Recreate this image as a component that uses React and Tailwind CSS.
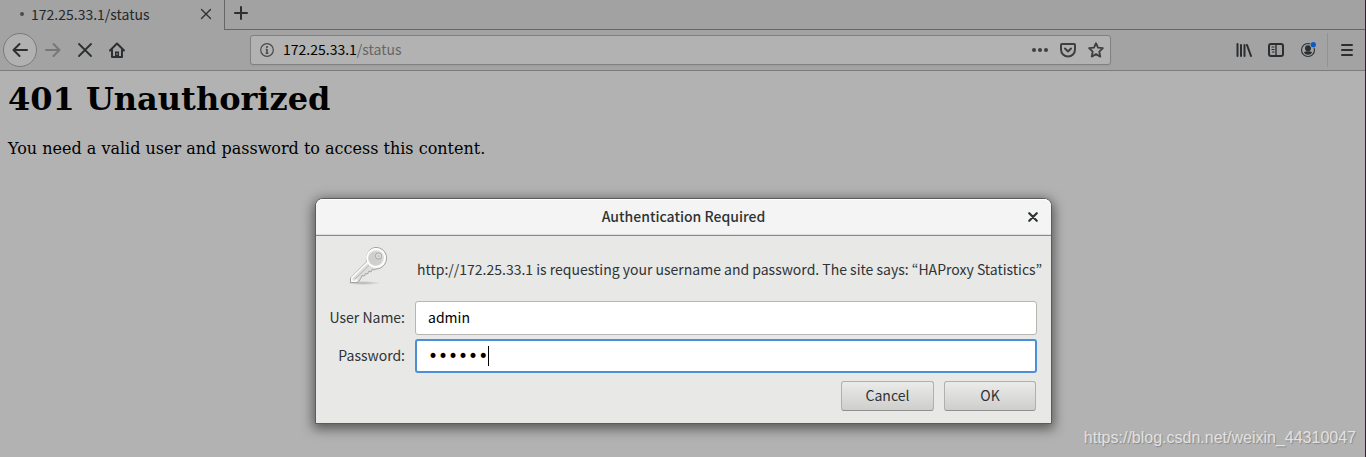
import React, { useState } from "react";

const BackIcon = () => (
  <svg width="16" height="16" viewBox="0 0 16 16" fill="none" stroke="currentColor" strokeWidth="2" strokeLinecap="round" strokeLinejoin="round">
    <path d="M15 8H1.5M7.5 2L1.5 8l6 6" />
  </svg>
);

const ForwardIcon = () => (
  <svg width="16" height="16" viewBox="0 0 16 16" fill="none" stroke="currentColor" strokeWidth="2" strokeLinecap="round" strokeLinejoin="round">
    <path d="M1 8h13.5M8.5 2l6 6-6 6" />
  </svg>
);

const CrossIcon = ({ size = 16, stroke = 1.8 }) => (
  <svg width={size} height={size} viewBox="0 0 16 16" fill="none" stroke="currentColor" strokeWidth={stroke} strokeLinecap="round">
    <path d="M2 2l12 12M14 2L2 14" />
  </svg>
);

const HomeIcon = () => (
  <svg width="16" height="16" viewBox="0 0 16 16" fill="none" stroke="currentColor" strokeWidth="2" strokeLinecap="round" strokeLinejoin="round">
    <path d="M1 8.5L8 1.5l7 7M3 8v7h10V8" />
    <path d="M6 15V9.5h4V15z" fill="currentColor" stroke="none" />
    <path d="M8 11.5v1" stroke="#a3a3a3" strokeWidth="1" />
  </svg>
);

const PlusIcon = () => (
  <svg width="16" height="16" viewBox="0 0 16 16" fill="none" stroke="currentColor" strokeWidth="2" strokeLinecap="round">
    <path d="M8 2v12M2 8h12" />
  </svg>
);

const InfoIcon = () => (
  <svg width="14" height="14" viewBox="0 0 14 14" fill="none" stroke="currentColor">
    <circle cx="7" cy="7" r="6.3" strokeWidth="1.2" />
    <path d="M7 3v2M7 6v4.5M5.7 10.3h2.6M5.8 6.5H7" strokeWidth="1.6" />
  </svg>
);

const DotsIcon = () => (
  <svg width="16" height="16" viewBox="0 0 16 16" fill="currentColor">
    <circle cx="2" cy="8" r="2" />
    <circle cx="8" cy="8" r="2" />
    <circle cx="14" cy="8" r="2" />
  </svg>
);

const PocketIcon = () => (
  <svg width="16" height="16" viewBox="0 0 16 16" fill="none" stroke="currentColor" strokeWidth="2" strokeLinecap="round" strokeLinejoin="round">
    <path d="M2 2h12a1 1 0 0 1 1 1v4.5a7 7 0 0 1-14 0V3a1 1 0 0 1 1-1z" />
    <path d="M5 6.5l3 3 3-3" />
  </svg>
);

const StarIcon = () => (
  <svg width="16" height="16" viewBox="0 0 16 16" fill="none" stroke="currentColor" strokeWidth="1.8" strokeLinejoin="round">
    <path d="M8 1.2l2 4.5 4.9.5-3.6 3.4 1 5L8 12.1l-4.3 2.5 1-5L1.1 6.2 6 5.7z" />
  </svg>
);

const LibraryIcon = () => (
  <svg width="16" height="16" viewBox="0 0 16 16" fill="none" stroke="currentColor" strokeWidth="2" strokeLinecap="round">
    <path d="M1.5 2v12M5 3v11M8.5 3v11M11 3l4 11" />
  </svg>
);

const SidebarIcon = () => (
  <svg width="16" height="16" viewBox="0 0 16 16" fill="none" stroke="currentColor">
    <rect x="1" y="2" width="14" height="12" rx="2" strokeWidth="2" />
    <path d="M8 2v12" strokeWidth="1.4" />
    <path d="M3.5 5h3M3.5 7.5h3M4 10h2.5" strokeWidth="1" />
  </svg>
);

const AccountIcon = () => (
  <svg width="16" height="16" viewBox="0 0 16 16" fill="currentColor">
    <circle cx="8" cy="8" r="6.5" fill="none" stroke="currentColor" strokeWidth="1.1" />
    <circle cx="8" cy="6.2" r="3" />
    <path d="M3.8 10.5c1-1 2.300-1.300 4.200-1.300s3.200.3 4.200 1.300a5 5 0 0 1-8.400 0z" />
    <circle cx="13.3" cy="2.7" r="3.2" fill="#a3a3a3" />
    <circle cx="13.3" cy="2.7" r="2.6" fill="#0a5bc4" />
  </svg>
);

const MenuIcon = () => (
  <svg width="16" height="16" viewBox="0 0 16 16" fill="none" stroke="currentColor" strokeWidth="2" strokeLinecap="round">
    <path d="M3 3h10M3 8h10M3 13h10" />
  </svg>
);

const KeyIcon = () => (
  <svg width="40" height="40" viewBox="0 0 40 40" fill="none">
    <defs>
      <linearGradient id="metal" x1="0" y1="0" x2="1" y2="1">
        <stop offset="0" stopColor="#f6f6f4" />
        <stop offset="0.5" stopColor="#dcddd9" />
        <stop offset="1" stopColor="#eeeeec" />
      </linearGradient>
      <radialGradient id="ground">
        <stop offset="0" stopColor="#777" stopOpacity="0.5" />
        <stop offset="1" stopColor="#777" stopOpacity="0" />
      </radialGradient>
    </defs>
    <ellipse cx="14" cy="37" rx="18" ry="2" fill="url(#ground)" />
    <path
      d="M27 1.5c6 0 10.500 4.500 10.500 10.500S33 23 27 23l-2 1-1.500-1-1.500 3-2-1-1.500 3-2-.5-1 2.500-2.500-.5-1 2.500-3 4.500H1.500v-4.500L17.500 16c-1-8 3-14.500 9.500-14.500z"
      fill="url(#metal)"
      stroke="#a2a49f"
      strokeWidth="1"
      strokeLinejoin="round"
    />
    <path d="M18.5 16.5L2.800 31.800v3.500h4l1.500-2" stroke="#fff" strokeWidth="1.4" />
    <path d="M20 19.500L6 33" stroke="#b5b6b2" strokeWidth="1" />
    <circle cx="27" cy="12" r="9" stroke="#fff" strokeWidth="1.8" />
    <circle cx="26.500" cy="12.500" r="7" fill="#cfd0cc" />
    <circle cx="29.500" cy="10" r="3" fill="#eeeeec" stroke="#a2a49f" />
    <circle cx="29.500" cy="10" r="1.5" fill="#c5c6c2" />
  </svg>
);

const ToolButton = ({ label, disabled, children }) => (
  <button
    aria-label={label}
    disabled={disabled}
    className="flex h-8 w-8 items-center justify-center text-[#2b2f31] disabled:text-[#777777]"
  >
    {children}
  </button>
);

const TabStrip = () => (
  <div className="flex h-[30px] bg-[#a2a2a2]">
    <div className="flex w-[225px] items-center border-r border-[#666666] bg-[#a3a3a3] pr-2 pb-0.5 pl-5">
      <span className="mr-[7px] h-1 w-1 rounded-full bg-[#4c4c4c]" />
      <span className="flex-1 text-[14px] leading-5 text-[#23282a]">172.25.33.1/status</span>
      <button aria-label="Close tab" className="flex h-5 w-5 items-center justify-center text-[#2b2f31]">
        <CrossIcon size={12} />
      </button>
    </div>
    <div className="flex flex-1 items-center border-b border-[#666666] pb-1 pl-2">
      <button aria-label="New tab" className="text-[#2b2f31]">
        <PlusIcon />
      </button>
    </div>
  </div>
);

const AddressBar = () => (
  <div className="mr-[117px] ml-[117px] flex h-[30px] flex-1 items-center rounded-[3px] border border-[#818181] bg-[#b2b2b2] pl-[9px] text-[#4a4a4a] shadow-xs">
    <InfoIcon />
    {/* host is darker than the path */}
    <div className="ml-[9px] flex-1 pb-0.5 text-[14px] leading-5 text-[#666666]">
      <span className="text-black">172.25.33.1</span>/status
    </div>
    <div className="flex text-[#3f3f3f]">
      <button aria-label="Page actions" className="flex w-7 justify-center">
        <DotsIcon />
      </button>
      <button aria-label="Save to Pocket" className="flex w-7 justify-center">
        <PocketIcon />
      </button>
      <button aria-label="Bookmark this page" className="flex w-7 justify-center">
        <StarIcon />
      </button>
    </div>
  </div>
);

const Toolbar = () => (
  <div className="flex h-[41px] items-center border-b border-[#7c7c7c] bg-[#a3a3a3] pr-[2px] pl-[3px]">
    <button
      aria-label="Back"
      className="flex h-[34px] w-[34px] items-center justify-center rounded-full border border-[#7a7a7a] bg-[#b1b1b1] text-[#2b2f31]"
    >
      <BackIcon />
    </button>
    <ToolButton label="Forward" disabled>
      <ForwardIcon />
    </ToolButton>
    <ToolButton label="Stop">
      <CrossIcon />
    </ToolButton>
    <ToolButton label="Home">
      <HomeIcon />
    </ToolButton>
    <AddressBar />
    <ToolButton label="Library">
      <LibraryIcon />
    </ToolButton>
    <ToolButton label="Sidebars">
      <SidebarIcon />
    </ToolButton>
    <ToolButton label="Account">
      <AccountIcon />
    </ToolButton>
    <div className="mr-[3px] ml-[3px] h-[34px] w-px bg-[#929292]" />
    <ToolButton label="Menu">
      <MenuIcon />
    </ToolButton>
  </div>
);

const inputBase = "block h-[34px] w-full rounded-[3px] bg-white text-black outline-none";
const buttonBase =
  "h-[30px] rounded-[3px] border border-[#b0b1ad] border-b-[#8f908d] bg-linear-to-b from-[#ebebea] to-[#cececc] pb-0.5 text-[14px] text-[#2e3436]";

const AuthDialog = () => {
  const [user, setUser] = useState("admin");
  const [password, setPassword] = useState("secret");

  return (
    <form
      role="dialog"
      aria-labelledby="auth-title"
      onSubmit={(e) => e.preventDefault()}
      className="w-[737px] rounded-t-lg border border-[#5c5c5c] bg-[#e8e8e7] text-[14px] text-[#2e3436] shadow-[0_3px_12px_2px_rgba(0,0,0,0.5)]"
    >
      <div className="grid h-[37px] grid-cols-[36px_1fr_36px] items-center rounded-t-[7px] border-b border-[#8b8b8b] bg-[#f4f4f4] shadow-[inset_0_1px_#ffffff,inset_0_-1px_#dddddd]">
        <h2 id="auth-title" className="col-start-2 pb-0.5 text-center font-medium">
          Authentication Required
        </h2>
        <button type="button" aria-label="Close" className="flex justify-center">
          <CrossIcon size={10} stroke={3.5} />
        </button>
      </div>

      <div className="grid grid-cols-[76px_minmax(0,1fr)] items-center gap-x-[10px] pr-[14px] pl-[13px]">
        <div className="flex h-[65px] items-start justify-end pt-[10px] pr-4">
          <KeyIcon />
        </div>
        <p className="pt-0.5 pl-0.5 whitespace-nowrap">
          http://172.25.33.1 is requesting your username and password. The site says: “HAProxy Statistics”
        </p>

        <label htmlFor="user" className="pb-0.5 text-right whitespace-nowrap">
          User Name:
        </label>
        <input
          id="user"
          value={user}
          onChange={(e) => setUser(e.target.value)}
          className={inputBase + " border border-[#b6b6b3] px-3 pb-0.5 text-[14px]"}
        />

        <label htmlFor="password" className="mt-1 pb-0.5 text-right">
          Password:
        </label>
        <div className="relative mt-1">
          <input
            id="password"
            type="password"
            value={password}
            onChange={(e) => setPassword(e.target.value)}
            className={inputBase + " border-2 border-[#4a90d9] px-[11px] font-['DejaVu_Sans',sans-serif] text-[17px] caret-transparent"}
          />
          {/* text cursor */}
          <span className="absolute top-[7px] left-[73px] h-5 w-px bg-black" />
        </div>
      </div>

      <div className="flex justify-end gap-[10px] pt-2 pr-[15px] pb-3">
        <button type="button" className={buttonBase + " w-[93px]"}>
          Cancel
        </button>
        <button type="submit" className={buttonBase + " w-[92px]"}>
          OK
        </button>
      </div>
    </form>
  );
};

const App = () => {
  return (
    <div className="relative min-h-screen border-r border-[#33222d] bg-[#b2b2b2] font-['Noto_Sans_CJK_KR',sans-serif]">
      <TabStrip />
      <Toolbar />

      <main className="px-2 pt-2 font-['DejaVu_Serif',serif] text-black">
        <h1 className="text-[32px] leading-10 font-bold">401 Unauthorized</h1>
        <p className="mt-5 text-[16px] leading-5">
          You need a valid user and password to access this content.
        </p>
      </main>

      <div className="absolute inset-x-0 top-[198px] flex justify-center pl-0.5">
        <AuthDialog />
      </div>

      <div className="absolute right-[9px] bottom-[7px] font-['Liberation_Sans',sans-serif] text-[16px] leading-6 text-[#e2e2e2] [text-shadow:1px_1px_1px_#888888]">
        https://blog.csdn.net/weixin_44310047
      </div>
    </div>
  );
};

export default App;
